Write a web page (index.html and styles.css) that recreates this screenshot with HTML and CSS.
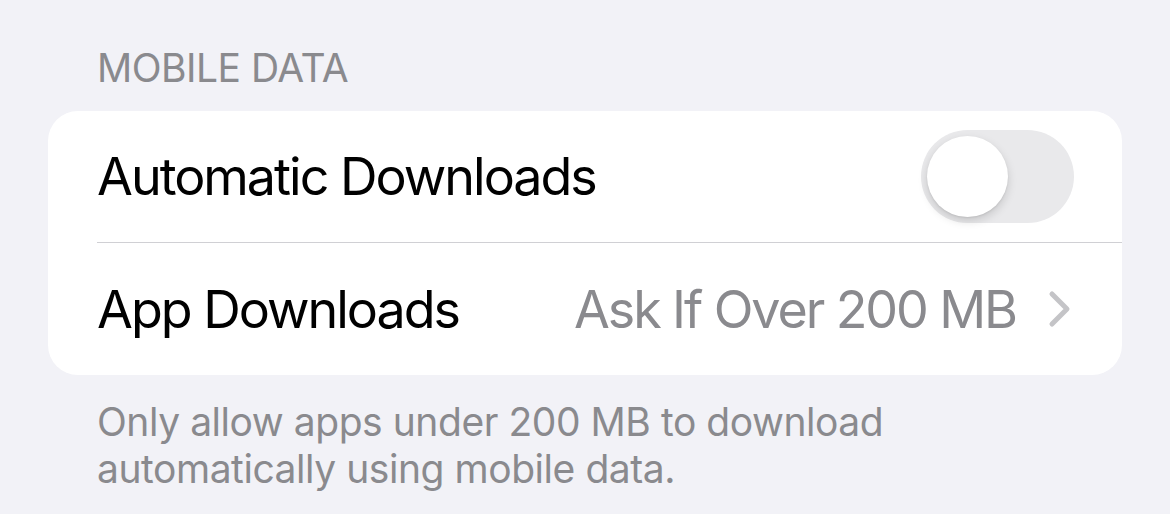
FILE: index.html
```html
<!DOCTYPE html>
<html lang="en">
<head>
  <meta charset="UTF-8">
  <title>Mobile Data</title>
  <link rel="stylesheet" href="styles.css">
</head>
<body>
  <div class="section">
    <div class="section-header">MOBILE DATA</div>
    <div class="group">
      <div class="row">
        <span class="row-label">Automatic Downloads</span>
        <div class="switch"><div class="knob"></div></div>
      </div>
      <div class="row">
        <span class="row-label">App Downloads</span>
        <span class="row-value">Ask If Over 200 MB</span>
        <svg class="chevron" width="24" height="38" viewBox="0 0 24 38">
          <path d="M4 4 L19 19 L4 34" fill="none" stroke="#c4c4c7" stroke-width="5" stroke-linecap="round" stroke-linejoin="round"/>
        </svg>
      </div>
    </div>
    <div class="section-footer">Only allow apps under 200 MB to download<br>automatically using mobile data.</div>
  </div>
</body>
</html>
```

FILE: styles.css
```css
body {
  margin: 0;
  background: #f2f2f7;
  font-family: Inter, 'Noto Sans', sans-serif;
}
.section {
  padding: 48px 48px 0 48px;
}
.section-header {
  padding-left: 49px;
  font-size: 39px;
  line-height: 40px;
  letter-spacing: -0.5px;
  color: #8a8a8e;
  margin-bottom: 23px;
}
.group {
  background: #fff;
  border-radius: 30px;
}
.row {
  display: flex;
  align-items: center;
  height: 131px;
  margin-left: 49px;
  padding-right: 48px;
}
.row + .row {
  border-top: 1.5px solid #d0d0d4;
  height: 132px;
}
.row-label {
  flex: 1;
  font-size: 52px;
  letter-spacing: -2px;
  color: #000;
}
.row-value {
  font-size: 52px;
  letter-spacing: -2.1px;
  color: #8a8a8e;
  margin-right: 32px;
}
.chevron {
  margin-right: 2px;
}
.switch {
  width: 153px;
  height: 93px;
  border-radius: 47px;
  background: #e9e9eb;
  display: flex;
  align-items: center;
  padding-left: 6px;
  box-sizing: border-box;
}
.knob {
  width: 81px;
  height: 81px;
  border-radius: 50%;
  background: #fff;
  box-shadow: 0 4px 10px rgba(0,0,0,0.15), 0 1px 2px rgba(0,0,0,0.08);
}
.section-footer {
  padding-left: 49px;
  margin-top: 23px;
  font-size: 39px;
  line-height: 47px;
  letter-spacing: -0.45px;
  color: #8a8a8e;
}
```
